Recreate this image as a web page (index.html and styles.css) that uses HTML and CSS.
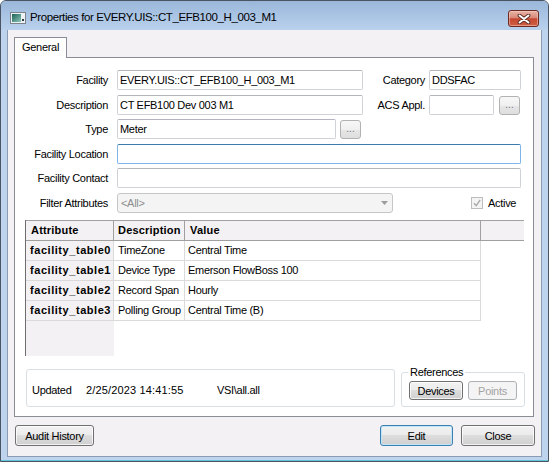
FILE: index.html
```html
<!DOCTYPE html>
<html>
<head>
<meta charset="utf-8">
<title>Properties</title>
<link rel="stylesheet" href="styles.css">
</head>
<body>
<div class="window">
  <div class="titlebar">
    <svg class="app-icon" width="16" height="16" viewBox="0 0 16 16">
      <defs>
        <linearGradient id="teal" x1="0" y1="0" x2="1" y2="1">
          <stop offset="0" stop-color="#1c6158"/>
          <stop offset="1" stop-color="#8fc7b8"/>
        </linearGradient>
      </defs>
      <rect x="0.5" y="2.5" width="15" height="11" fill="#eef1f3" stroke="#7b848c"/>
      <rect x="2" y="4" width="9" height="8" fill="url(#teal)"/>
      <rect x="12" y="9" width="2" height="2" fill="#2f3a40"/>
    </svg>
    <span class="title">Properties for EVERY.UIS::CT_EFB100_H_003_M1</span>
    <div class="close-btn">
      <svg width="14" height="10" viewBox="0 0 14 10">
        <path d="M2.5 1.5 L11.5 8.5 M11.5 1.5 L2.5 8.5" stroke="#5a2a24" stroke-width="3.8" stroke-linecap="round"/>
        <path d="M2.5 1.5 L11.5 8.5 M11.5 1.5 L2.5 8.5" stroke="#ffffff" stroke-width="2" stroke-linecap="round"/>
      </svg>
    </div>
  </div>

  <div class="client">
    <div class="tabstrip">
      <div class="tab">General</div>
    </div>
    <div class="panel">
      <div class="row">
        <span class="lbl">Facility</span>
        <div class="tb w246">EVERY.UIS::CT_EFB100_H_003_M1</div>
        <span class="lbl2">Category</span>
        <div class="tb w92">DDSFAC</div>
      </div>
      <div class="row gap5">
        <span class="lbl">Description</span>
        <div class="tb w246">CT EFB100 Dev 003 M1</div>
        <span class="lbl2">ACS Appl.</span>
        <div class="tb w65"></div>
        <button class="dots-btn ml5">...</button>
      </div>
      <div class="row gap4">
        <span class="lbl">Type</span>
        <div class="tb w219">Meter</div>
        <button class="dots-btn ml4">...</button>
      </div>
      <div class="row gap5">
        <span class="lbl">Facility Location</span>
        <div class="tb w404 focused"></div>
      </div>
      <div class="row gap4">
        <span class="lbl">Facility Contact</span>
        <div class="tb w404"></div>
      </div>
      <div class="row gap5">
        <span class="lbl">Filter Attributes</span>
        <div class="combo w276">
          <span class="combo-text">&lt;All&gt;</span>
          <svg width="7" height="4" viewBox="0 0 7 4"><polygon points="0,0 7,0 3.5,4" fill="#9c9c9c"/></svg>
        </div>
        <div class="check-wrap">
          <span class="checkbox">
            <svg width="10" height="10" viewBox="0 0 10 10"><path d="M2 5.2 L4.2 7.6 L8.2 1.8" fill="none" stroke="#a9a9a9" stroke-width="1.4"/></svg>
          </span>
          <span class="check-label">Active</span>
        </div>
      </div>

      <div class="grid">
        <div class="grid-head">
          <div class="hc c1">Attribute</div>
          <div class="hc c2">Description</div>
          <div class="hc c3">Value</div>
        </div>
        <div class="grid-row">
          <div class="rc c1">facility_table0</div>
          <div class="rc c2">TimeZone</div>
          <div class="rc c3">Central Time</div>
        </div>
        <div class="grid-row">
          <div class="rc c1">facility_table1</div>
          <div class="rc c2">Device Type</div>
          <div class="rc c3">Emerson FlowBoss 100</div>
        </div>
        <div class="grid-row">
          <div class="rc c1">facility_table2</div>
          <div class="rc c2">Record Span</div>
          <div class="rc c3">Hourly</div>
        </div>
        <div class="grid-row">
          <div class="rc c1">facility_table3</div>
          <div class="rc c2">Polling Group</div>
          <div class="rc c3">Central Time (B)</div>
        </div>
      </div>

      <div class="bottom">
        <div class="updated-box">
          <span class="u1">Updated</span>
          <span class="u2">2/25/2023 14:41:55</span>
          <span class="u3">VSI\all.all</span>
        </div>
        <fieldset class="refs">
          <legend>References</legend>
          <div class="refs-buttons">
            <button class="btn btn-devices">Devices</button>
            <button class="btn btn-points disabled">Points</button>
          </div>
        </fieldset>
      </div>
    </div>

    <div class="footer">
      <button class="btn big btn-audit">Audit History</button>
      <div class="footer-right">
        <button class="btn big btn-edit default">Edit</button>
        <button class="btn big btn-close">Close</button>
      </div>
    </div>
  </div>
</div>
</body>
</html>
```

FILE: styles.css
```css
* { box-sizing: border-box; }

html, body {
  margin: 0;
  padding: 0;
}

body {
  width: 549px;
  height: 462px;
  overflow: hidden;
  background: #ffffff;
  font-family: "Liberation Sans", Arial, sans-serif;
  font-size: 11px;
  letter-spacing: -0.3px;
  color: #000;
}

.window {
  width: 549px;
  height: 462px;
  border: 1px solid #4a5462;
  border-radius: 6px 6px 0 0;
  background: #bdd3ee;
  box-shadow: inset 0 -1px 0 #62c6d6;
  display: flex;
  flex-direction: column;
}

/* Title bar */
.titlebar {
  height: 29px;
  flex: none;
  display: flex;
  align-items: flex-start;
  padding: 9px 9px 0 9px;
  background: linear-gradient(#9ab7da, #b9d1ed);
  border-radius: 5px 5px 0 0;
}

.app-icon {
  flex: none;
  margin-right: 4px;
}

.title {
  flex: 1;
  font-size: 11.5px;
  line-height: 15px;
  letter-spacing: -0.4px;
  white-space: nowrap;
  color: #000;
}

.close-btn {
  flex: none;
  width: 31px;
  height: 17px;
  border: 1px solid #6b2a22;
  border-radius: 3px;
  background: linear-gradient(#e8b4a7 0%, #d88a78 45%, #c5482f 52%, #cf5f45 100%);
  box-shadow: inset 0 0 0 1px rgba(255, 220, 210, 0.45);
  display: flex;
  align-items: center;
  justify-content: center;
}

/* Client area */
.client {
  flex: 1;
  margin: 0 6px 4px 6px;
  border: 1px solid #8a9bb2;
  border-top: none;
  background: #f4f1f4;
  padding: 7px 7px 0 6px;
  display: flex;
  flex-direction: column;
}

.tabstrip {
  display: flex;
  height: 20px;
  flex: none;
}

.tab {
  position: relative;
  z-index: 1;
  width: 53px;
  height: 21px;
  border: 1px solid #898c95;
  border-bottom: none;
  background: #ffffff;
  padding: 0 0 0 7px;
  line-height: 19px;
}

.panel {
  height: 360px;
  flex: none;
  border: 1px solid #898c95;
  background: #ffffff;
  padding: 12px 0 0 0;
}

/* Form rows */
.row {
  display: flex;
  align-items: center;
  height: 20px;
}

.gap5 { margin-top: 5px; }
.gap4 { margin-top: 4px; }

.lbl {
  width: 93px;
  margin-right: 9px;
  text-align: right;
  white-space: nowrap;
}

.lbl2 {
  width: 62px;
  margin-right: 4px;
  text-align: right;
  white-space: nowrap;
}

.tb {
  height: 20px;
  border: 1px solid #cfd3d8;
  border-top-color: #b3b7bd;
  border-radius: 2px;
  background: #ffffff;
  padding: 0 2px;
  line-height: 18px;
  white-space: nowrap;
  overflow: hidden;
}

.tb.focused {
  border-color: #7eb4ea;
  border-top-color: #3d7bad;
}

.w246 { width: 246px; }
.w92 { width: 92px; }
.w65 { width: 65px; }
.w219 { width: 219px; }
.w404 { width: 404px; }
.w276 { width: 276px; }

.dots-btn {
  width: 21px;
  height: 19px;
  align-self: flex-start;
  margin-top: 1px;
  padding: 0 0 3px 0;
  border: 1px solid #b2b2b2;
  border-radius: 3px;
  background: linear-gradient(#f7f7f7 0%, #f0f0f0 50%, #e6e6e6 51%, #dedede 100%);
  font-family: inherit;
  font-size: 10px;
  letter-spacing: 0;
  color: #7a7a7a;
  line-height: 12px;
  display: flex;
  align-items: flex-end;
  justify-content: center;
}

.ml5 { margin-left: 5px; }
.ml4 { margin-left: 4px; }

.combo {
  height: 20px;
  border: 1px solid #c6c6c6;
  border-radius: 3px;
  background: #f4f4f4;
  padding: 0 4px 0 2px;
  display: flex;
  align-items: center;
  justify-content: space-between;
}

.combo-text {
  color: #8e8e8e;
  padding-left: 1px;
}

.check-wrap {
  display: flex;
  align-items: center;
  margin-left: 78px;
}

.checkbox {
  width: 12px;
  height: 12px;
  border: 1px solid #bdbdbd;
  background: #f4f4f4;
  margin-right: 5px;
  display: flex;
  align-items: center;
  justify-content: center;
}

/* Data grid */
.grid {
  width: 499px;
  height: 136px;
  margin: 7px 0 0 10px;
  border-left: 1px solid #6e6e6e;
  background: linear-gradient(to right, #f4f1f4 88px, #ffffff 88px);
}

.grid-head {
  display: flex;
  height: 21px;
  border-top: 1px solid #a0a0a0;
  border-bottom: 1px solid #a0a0a0;
  background: #f4f1f4;
}

.hc {
  height: 19px;
  line-height: 19px;
  border-right: 1px solid #a0a0a0;
  font-weight: bold;
  letter-spacing: 0.2px;
  white-space: nowrap;
}

.grid-row {
  display: flex;
  height: 20px;
}

.rc {
  height: 20px;
  line-height: 19px;
  border-right: 1px solid #dadada;
  border-bottom: 1px solid #dadada;
  background: #ffffff;
  white-space: nowrap;
  overflow: hidden;
}

.c1 { width: 88px; padding-left: 4px; }
.c2 { width: 71px; padding-left: 4px; }
.c3 { width: 296px; padding-left: 3px; }

.hc.c1 { padding-left: 5px; }
.hc.c3 { padding-left: 5px; }

.rc.c1 {
  background: #f4f1f4;
  font-weight: bold;
  letter-spacing: 0.55px;
}

/* Bottom groups */
.bottom {
  display: flex;
  align-items: flex-end;
  gap: 6px;
  margin: 9px 0 0 11px;
}

.updated-box {
  width: 369px;
  height: 38px;
  border: 1px solid #d7dfe5;
  border-radius: 3px;
  display: flex;
  align-items: center;
  padding: 3px 0 0 5px;
  white-space: nowrap;
}

.u1 { width: 54px; }
.u2 { width: 131px; letter-spacing: 0.15px; }

.refs {
  width: 124px;
  margin: 0;
  min-width: 0;
  padding: 2px 6px 6px 6px;
  border: 1px solid #d7dfe5;
  border-radius: 3px;
}

.refs legend {
  padding: 0 2px;
  line-height: 14px;
  font-size: 11px;
}

.refs-buttons {
  display: flex;
  gap: 5px;
  padding-left: 1px;
}

/* Buttons */
.btn {
  height: 19px;
  padding: 0;
  border: 1px solid #707070;
  border-radius: 3px;
  background: linear-gradient(#f2f2f2 0%, #ebebeb 49%, #dddddd 50%, #cfcfcf 100%);
  box-shadow: inset 0 0 0 1px rgba(255, 255, 255, 0.75);
  font-family: inherit;
  font-size: 11px;
  letter-spacing: -0.3px;
  color: #000;
  line-height: 16px;
  text-align: center;
}

.btn-devices { width: 54px; }
.btn-points { width: 49px; }

.btn.disabled {
  border-color: #adb2b5;
  background: #f4f4f4;
  box-shadow: none;
  color: #a3a3a3;
}

.btn.big {
  height: 21px;
  line-height: 18px;
}

.btn-audit { width: 79px; }
.btn-edit { width: 73px; }
.btn-close { width: 74px; }

.btn.default {
  border-color: #3c7fb1;
  box-shadow: inset 0 0 0 1px #bfe5f9;
}

.footer {
  display: flex;
  justify-content: space-between;
  margin: 8px -1px 0 1px;
}

.footer-right {
  display: flex;
  gap: 8px;
}
```
